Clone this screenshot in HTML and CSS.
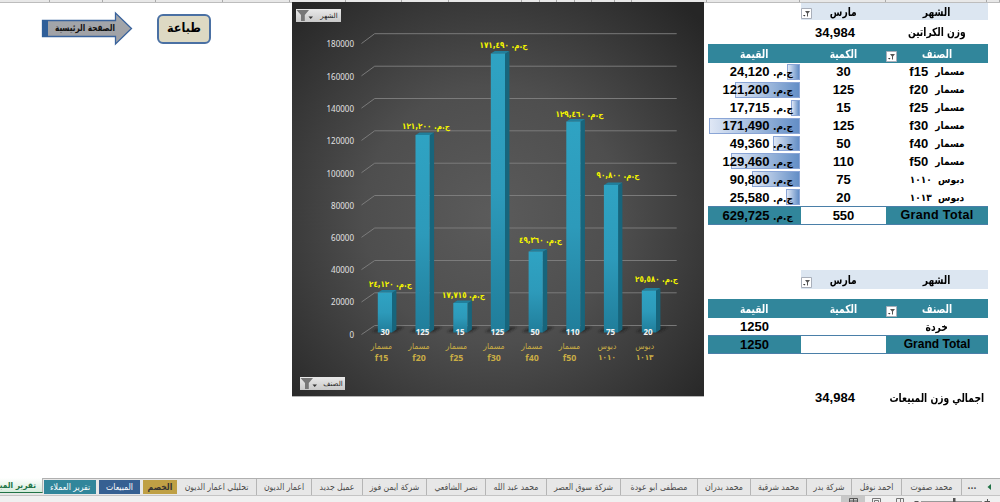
FILE: index.html
```html
<!DOCTYPE html>
<html lang="ar">
<head>
<meta charset="utf-8">
<title>تقرير المبيعات</title>
<link rel="stylesheet" href="styles.css">
</head>
<body>
<div class="app">
  <div class="colheads">
    <i class="w50"></i><i class="w53"></i><i class="w53"></i><i class="w67"></i><i class="w67"></i><i class="w56"></i><i class="w56"></i><i class="w47"></i><i class="w73"></i><i class="w18"></i><i class="w17"></i><i class="w18"></i><i class="w17"></i><i class="w23"></i><i class="w17"></i><i class="w75"></i><i class="w93"></i><i class="w86"></i><i class="w101"></i><i class="rest"></i>
  </div>
  <main class="sheet">
    <section class="actions">
      <svg class="home" width="92" height="36" viewBox="41 11 92 36">
        <defs><linearGradient id="ar" x1="0" y1="0" x2="0" y2="1"><stop offset="0" stop-color="#a3a7ac"/><stop offset="1" stop-color="#a0a0a4"/></linearGradient></defs>
        <path d="M42.500 20.500H115.500V13L131.500 28.500L115.500 44V36.500H42.500Z" fill="url(#ar)" stroke="#39639d" stroke-width="1.300"/>
        <path d="M42 20H48V37H42Z" fill="#2f5f99"/>
        <text x="85" y="30.800" text-anchor="middle" direction="rtl" class="home-text" textLength="60" lengthAdjust="spacingAndGlyphs">الصفحة الرئيسية</text>
      </svg>
      <button class="print" dir="rtl">طباعة</button>
    </section>

    <svg class="chart" width="412" height="395" viewBox="292 2 412 395">
      <defs>
        <radialGradient id="bg" gradientUnits="userSpaceOnUse" cx="492" cy="215" r="285"><stop offset="0" stop-color="#5b5b5b"/><stop offset=".45" stop-color="#4e4e4e"/><stop offset="1" stop-color="#262626"/></radialGradient>
        <linearGradient id="front" x1="0" y1="0" x2="0" y2="1"><stop offset="0" stop-color="#2fa3c3"/><stop offset=".5" stop-color="#2d9aba"/><stop offset="1" stop-color="#207d9a"/></linearGradient>
        <linearGradient id="chip" x1="0" y1="0" x2="0" y2="1"><stop offset="0" stop-color="#e9e9e9"/><stop offset="1" stop-color="#c9c9c9"/></linearGradient>
        <filter id="soft" x="-30%" y="-60%" width="160%" height="220%"><feGaussianBlur stdDeviation="1.300"/></filter>
      </defs>
      <rect x="292" y="2" width="412" height="395" fill="url(#bg)"/>
      <path d="M292 396.500H704" stroke="#b5b5b5"/>
      <g class="grid">
        <path d="M361.500 43.500L374.700 33.700H676.700"/><path d="M361.500 75.800L374.700 66.200H676.700"/><path d="M361.500 108.100L374.700 98.500H676.700"/><path d="M361.500 140.400L374.700 130.800H676.700"/><path d="M361.500 172.700L374.700 163.200H676.700"/><path d="M361.500 205L374.700 195.500H676.700"/><path d="M361.500 237.300L374.700 228H676.700"/><path d="M361.500 269.600L374.700 260.500H676.700"/><path d="M361.500 302L374.700 292.800H676.700"/><path d="M361.500 334.500L374.700 325.500H676.700"/>
      </g>
      <g class="axis">
        <text x="354" y="47">180000</text><text x="354" y="79.500">160000</text><text x="354" y="111.500">140000</text><text x="354" y="144">120000</text><text x="354" y="176.500">100000</text><text x="354" y="208.500">80000</text><text x="354" y="241">60000</text><text x="354" y="273">40000</text><text x="354" y="305.300">20000</text><text x="354" y="337.500">0</text>
      </g>
      <g fill="#202020" opacity=".75" filter="url(#soft)">
        <path d="M372 332L380 327H404L396 332Z"/><path d="M410 332L418 327H442L434 332Z"/><path d="M447 332L455 327H479L471 332Z"/><path d="M485 332L493 327H517L509 332Z"/><path d="M522 332L530 327H554L546 332Z"/><path d="M560 332L568 327H592L584 332Z"/><path d="M598 332L606 327H630L622 332Z"/><path d="M636 332L644 327H668L660 332Z"/>
      </g>
      <g fill="#17657c">
        <path d="M392 292.500L396.400 290V329.500L392 332.500Z"/><path d="M429.700 135L434.100 132.500V329.500L429.700 332.500Z"/><path d="M467.500 303L471.900 300.500V329.500L467.500 332.500Z"/><path d="M505 53.500L509.400 51V329.500L505 332.500Z"/><path d="M542.800 251.500L547.200 249V329.500L542.800 332.500Z"/><path d="M580.500 121.500L584.900 119V329.500L580.500 332.500Z"/><path d="M618 185L622.400 182.500V329.500L618 332.500Z"/><path d="M656 290.500L660.400 288V329.500L656 332.500Z"/>
      </g>
      <g fill="#217f9c">
        <path d="M378 292.500L382 290H396.400L392 292.800Z"/><path d="M415.500 135L419.500 132.500H434.100L429.700 135.300Z"/><path d="M453.300 303L457.300 300.500H471.900L467.500 303.300Z"/><path d="M490.800 53.500L494.800 51H509.400L505 53.800Z"/><path d="M528.600 251.500L532.600 249H547.200L542.800 251.800Z"/><path d="M566.300 121.500L570.300 119H584.900L580.500 121.800Z"/><path d="M604 185L608 182.500H622.400L618 185.300Z"/><path d="M641.800 290.500L645.800 288H660.400L656 290.800Z"/>
      </g>
      <g fill="url(#front)">
        <rect x="377.800" y="292.500" width="14.200" height="40"/><rect x="415.500" y="135" width="14.200" height="197.500"/><rect x="453.300" y="303" width="14.200" height="29.500"/><rect x="490.800" y="53.500" width="14.200" height="279"/><rect x="528.600" y="251.500" width="14.200" height="81"/><rect x="566.300" y="121.500" width="14.200" height="211"/><rect x="603.900" y="185" width="14.200" height="147.500"/><rect x="641.800" y="290.500" width="14.200" height="42"/>
      </g>
      <g class="money" direction="rtl">
        <text x="390.500" y="286.500" textLength="43" lengthAdjust="spacingAndGlyphs">ج.م. ٢٤,١٢٠</text>
        <text x="426" y="128.500" textLength="48" lengthAdjust="spacingAndGlyphs">ج.م. ١٢١,٢٠٠</text>
        <text x="463.500" y="298" textLength="43" lengthAdjust="spacingAndGlyphs">ج.م. ١٧,٧١٥</text>
        <text x="503.500" y="47.500" textLength="48" lengthAdjust="spacingAndGlyphs">ج.م. ١٧١,٤٩٠</text>
        <text x="540.500" y="242.500" textLength="43" lengthAdjust="spacingAndGlyphs">ج.م. ٤٩,٣٦٠</text>
        <text x="579.500" y="116.500" textLength="48" lengthAdjust="spacingAndGlyphs">ج.م. ١٢٩,٤٦٠</text>
        <text x="618" y="177.500" textLength="43" lengthAdjust="spacingAndGlyphs">ج.م. ٩٠,٨٠٠</text>
        <text x="656.500" y="281.500" textLength="43" lengthAdjust="spacingAndGlyphs">ج.م. ٢٥,٥٨٠</text>
      </g>
      <g class="qty">
        <text x="385" y="335">30</text><text x="422.500" y="335">125</text><text x="460" y="335">15</text><text x="497.500" y="335">125</text><text x="535" y="335">50</text><text x="572.700" y="335">110</text><text x="610.500" y="335">75</text><text x="648" y="335">20</text>
      </g>
      <g class="cat">
        <text x="381.500" y="348.500" class="word">مسمار</text><text x="381.500" y="361">f15</text>
        <text x="419" y="348.500" class="word">مسمار</text><text x="419" y="361">f20</text>
        <text x="456.500" y="348.500" class="word">مسمار</text><text x="456.500" y="361">f25</text>
        <text x="494" y="348.500" class="word">مسمار</text><text x="494" y="361">f30</text>
        <text x="532" y="348.500" class="word">مسمار</text><text x="532" y="361">f40</text>
        <text x="569.500" y="348.500" class="word">مسمار</text><text x="569.500" y="361">f50</text>
        <text x="607" y="348.500" class="word">دبوس</text><text x="607" y="359.500" class="code">١٠١٠</text>
        <text x="644.700" y="348.500" class="word">دبوس</text><text x="644.700" y="359.500" class="code">١٠١٣</text>
      </g>
      <g class="chip">
        <rect x="296" y="9" width="45" height="13" fill="url(#chip)"/>
        <path d="M296.500 10H309L304.800 15V21H301V15Z" fill="#777"/><path d="M308.500 16.500H313L310.700 19Z" fill="#333"/>
        <text x="329" y="18">الشهر</text>
        <rect x="300" y="377" width="45" height="13" fill="url(#chip)"/>
        <path d="M300.500 378H313L308.800 383V389H305V383Z" fill="#777"/><path d="M312.500 384.500H317L314.700 387Z" fill="#333"/>
        <text x="333" y="386">الصنف</text>
      </g>
    </svg>

    <section class="tables">
      <svg width="0" height="0" class="defs"><symbol id="filter" viewBox="0 0 11 11"><path d="M.5 .5H10.500V10.500H.5Z" fill="#fff" stroke="#a9afba"/><path d="M4 3H9L7 5.500V8.500H6V5.500Z" fill="#555"/><path d="M2 7H4.500L3.250 8.500Z" fill="#333"/></symbol></svg>
      <div class="row month"><span class="val"></span><span class="num"><svg class="filter"><use href="#filter"/></svg><b class="a">مارس</b></span><span class="name"><b class="a">الشهر</b></span></div>
      <div class="row weight"><span class="val"></span><span class="num">34,984</span><span class="name"><b class="a">وزن الكراتين</b></span></div>
      <div class="row head"><span class="val"><b class="a">القيمة</b></span><span class="num"><b class="a">الكمية</b></span><span class="name"><svg class="filter"><use href="#filter"/></svg><b class="a">الصنف</b></span></div>
      <div class="body">
        <div class="row"><span class="val money-cell" dir="rtl"><i style="width:13px"></i><b><b class="s">ج.م.</b> 24,120</b></span><span class="num">30</span><span class="name" dir="rtl"><b class="s">مسمار</b>&nbsp;&nbsp;f15</span></div>
        <div class="row"><span class="val money-cell" dir="rtl"><i style="width:65px"></i><b><b class="s">ج.م.</b> 121,200</b></span><span class="num">125</span><span class="name" dir="rtl"><b class="s">مسمار</b>&nbsp;&nbsp;f20</span></div>
        <div class="row"><span class="val money-cell" dir="rtl"><i style="width:9px"></i><b><b class="s">ج.م.</b> 17,715</b></span><span class="num">15</span><span class="name" dir="rtl"><b class="s">مسمار</b>&nbsp;&nbsp;f25</span></div>
        <div class="row"><span class="val money-cell" dir="rtl"><i style="width:91px"></i><b><b class="s">ج.م.</b> 171,490</b></span><span class="num">125</span><span class="name" dir="rtl"><b class="s">مسمار</b>&nbsp;&nbsp;f30</span></div>
        <div class="row"><span class="val money-cell" dir="rtl"><i style="width:27px"></i><b><b class="s">ج.م.</b> 49,360</b></span><span class="num">50</span><span class="name" dir="rtl"><b class="s">مسمار</b>&nbsp;&nbsp;f40</span></div>
        <div class="row"><span class="val money-cell" dir="rtl"><i style="width:69px"></i><b><b class="s">ج.م.</b> 129,460</b></span><span class="num">110</span><span class="name" dir="rtl"><b class="s">مسمار</b>&nbsp;&nbsp;f50</span></div>
        <div class="row"><span class="val money-cell" dir="rtl"><i style="width:48px"></i><b><b class="s">ج.م.</b> 90,800</b></span><span class="num">75</span><span class="name" dir="rtl"><b class="s">دبوس&nbsp; ١٠١٠</b></span></div>
        <div class="row"><span class="val money-cell" dir="rtl"><i style="width:14px"></i><b><b class="s">ج.م.</b> 25,580</b></span><span class="num">20</span><span class="name" dir="rtl"><b class="s">دبوس&nbsp; ١٠١٣</b></span></div>
      </div>
      <div class="row total"><span class="val money-cell" dir="rtl"><b><b class="s">ج.م.</b> 629,725</b></span><span class="num">550</span><span class="name">Grand Total</span></div>

      <div class="row month second"><span class="val"></span><span class="num"><svg class="filter"><use href="#filter"/></svg><b class="a">مارس</b></span><span class="name"><b class="a">الشهر</b></span></div>
      <div class="row head second"><span class="val"><b class="a">القيمة</b></span><span class="num"><b class="a">الكمية</b></span><span class="name"><svg class="filter"><use href="#filter"/></svg><b class="a">الصنف</b></span></div>
      <div class="row scrap"><span class="val">1250</span><span class="num"></span><span class="name"><b class="a">خردة</b></span></div>
      <div class="row total"><span class="val">1250</span><span class="num"></span><span class="name small">Grand Total</span></div>
      <div class="row sum"><span class="val"></span><span class="num">34,984</span><span class="name"><b class="a">اجمالي وزن المبيعات</b></span></div>
    </section>
  </main>

  <nav class="tabs">
    <span class="tab active">تقرير المبيعات</span>
    <span class="tab teal">تقرير العملاء</span>
    <span class="tab blue">المبيعات</span>
    <span class="tab gold">الخصم</span>
    <span class="tab t1">تحليلي اعمار الديون</span>
    <span class="tab t2">اعمار الديون</span>
    <span class="tab t3">عميل جديد</span>
    <span class="tab t4">شركة ايمن فوز</span>
    <span class="tab t5">نصر الشافعي</span>
    <span class="tab t6">محمد عبد الله</span>
    <span class="tab t7">شركة سوق العصر</span>
    <span class="tab t8">مصطفى ابو عودة</span>
    <span class="tab t9">محمد بدران</span>
    <span class="tab t10">محمد شرقية</span>
    <span class="tab t11">شركة بدر</span>
    <span class="tab t12">احمد نوفل</span>
    <span class="tab t13">محمد صفوت</span>
    <span class="more">...</span>
    <svg class="prev" width="5" height="6" viewBox="0 0 5 6"><path d="M4 0V6L0.500 3Z" fill="#217346"/></svg>
  </nav>
  <footer class="status">
    <svg width="160" height="6" viewBox="840 496 160 6">
      <rect x="841" y="496" width="24" height="6" fill="#c8c8c8"/>
      <path d="M849.500 502V498.500H857.500V502M849.500 501H857.500M853.500 498.500V502" fill="none" stroke="#555"/>
      <path d="M872.500 502V498.500H880.500V502M874.500 502V500.500H878.500V502" fill="none" stroke="#777"/>
      <path d="M896.500 502V498.500H903.500V502M900.500 498V502" fill="none" stroke="#777"/>
      <path d="M914.500 501.500H918.500M984.500 501.500H990M987.500 499V502" stroke="#555"/>
      <path d="M921 501.500H982" stroke="#999"/><path d="M953 498H955.500V502H953Z" fill="#555"/>
    </svg>
  </footer>
</div>
</body>
</html>
```
FILE: styles.css
```css
* { box-sizing: border-box; }
body { margin: 0; background: #fff; font-family: "Liberation Sans", "DejaVu Sans", sans-serif; color: #000; }
.app { width: 1000px; height: 502px; display: flex; flex-direction: column; overflow: hidden; }

.colheads { display: flex; height: 3px; flex: none; background: #e8e8e8; border-bottom: 1px solid #bdbdbd; }
.colheads i { border-right: 1px solid #aaa; flex: none; }
.colheads .rest { flex: 1; }
.w50 { width: 50px; } .w53 { width: 53px; } .w67 { width: 67px; } .w56 { width: 56px; }
.w47 { width: 47px; } .w73 { width: 73px; } .w18 { width: 18px; } .w17 { width: 17px; }
.w23 { width: 23px; } .w75 { width: 75px; } .w93 { width: 93px; } .w86 { width: 86px; } .w101 { width: 101px; }

.sheet { display: flex; height: 475px; flex: none; }
.actions { width: 292px; display: flex; align-items: flex-start; padding: 8px 0 0 41px; gap: 24px; }
.home-text { font: bold 9.500px "DejaVu Sans Condensed", "DejaVu Sans", sans-serif; fill: #111; }
.print { width: 54px; height: 30px; margin-top: 3px; padding: 0 0 3px; border: 2px solid #4a70a3; border-radius: 6px; background: #ddd9c3; font: bold 12.500px "DejaVu Sans Condensed", "DejaVu Sans", sans-serif; color: #000; }

.chart { display: block; flex: none; margin-top: -1px; }
.grid path { fill: none; stroke: #808080; stroke-width: .9; }
.axis text { font: 8px "Noto Sans", sans-serif; fill: #e2e2e2; text-anchor: end; }
.money text { font: bold 8.500px "DejaVu Sans Condensed", "DejaVu Sans", sans-serif; fill: #f4f400; text-anchor: middle; }
.qty text { font: bold 8px "Noto Sans", sans-serif; fill: #f2f2f2; text-anchor: middle; }
.cat text { font: bold 8.800px "Noto Sans", "DejaVu Sans", sans-serif; fill: #c9ad45; text-anchor: middle; }
.cat .word { font: 8.500px "DejaVu Sans Condensed", "DejaVu Sans", sans-serif; }
.cat .code { font: bold 8px "DejaVu Sans Condensed", "DejaVu Sans", sans-serif; }
.chip text { font: 7px "DejaVu Sans", sans-serif; fill: #222; text-anchor: middle; }

.tables { width: 280px; margin-left: 4px; flex: none; font-weight: bold; font-size: 13px; }
.tables b { font-weight: bold; }
.defs { display: block; }
.row { display: grid; grid-template-columns: 93px 85px 102px; height: 17.900px; white-space: nowrap; }
.row > span { display: flex; align-items: center; justify-content: center; position: relative; min-width: 0; }
.a, .s { font-family: "DejaVu Sans Condensed", "DejaVu Sans", sans-serif; }
.a { display: inline-block; font-size: 11.500px; transform: scaleX(.88); }
.s { font-size: 10px; }
.month { height: 17px; }
.month .num, .month .name { background: #dce6f1; }
.weight { height: 24px; }
.weight .num, .sum .num { padding-right: 17px; }
.head { height: 19px; color: #fff; }
.head > span { background: #31869b; }
.filter { position: absolute; left: 0; bottom: 1px; width: 11px; height: 11px; }
.row > .money-cell { justify-content: flex-start; padding-right: 8px; }
.money-cell > b { position: relative; }
.money-cell i { position: absolute; right: 1px; top: 1px; bottom: 1px; border: 1px solid #8aa5d6; background: linear-gradient(to right, #dfe7f5, #638ec6); }
.total { height: 18.500px; }
.total > span { background: #31869b; border: solid #4a7fa8; border-width: 1px 0; }
.total > .num { background: #fff; }
.total .name { font-size: 12.500px; letter-spacing: .35px; }
.total .small { font-size: 12px; letter-spacing: 0; }
.month.second { margin-top: 45.500px; height: 19px; }
.head.second { margin-top: 10px; }
.scrap { height: 17px; }
.sum { margin-top: 35px; }

.tabs { height: 18px; flex: none; display: flex; background: #e7e7e7; border-top: 1px solid #b0b0b0; border-bottom: 1px solid #c4c4c4; font: 8.600px "DejaVu Sans Condensed", "DejaVu Sans", sans-serif; color: #4a4a4a; direction: ltr; }
.tab { display: flex; align-items: center; justify-content: center; flex: none; white-space: nowrap; direction: rtl; overflow: hidden; border-right: 1px solid #b5b5b5; padding-bottom: 1px; }
.active { width: 43px; justify-content: flex-start; padding-right: 6px; height: 15px; margin-top: -1px; background: linear-gradient(#fff, #d5ebdc); color: #217346; font-weight: bold; font-size: 8.300px; border-bottom: 1px solid #217346; }
.teal, .blue, .gold { margin: 1px 0; border: 0; color: #fff; }
.teal { width: 52px; margin-left: 1px; background: #31869b; }
.blue { width: 41px; margin-left: 3px; background: #366092; }
.gold { width: 34px; margin-left: 3px; background: #bfa045; color: #333; font-weight: bold; }
.t1 { width: 80px; } .t2 { width: 55px; } .t3 { width: 51px; } .t4 { width: 64px; } .t5 { width: 59px; }
.t6 { width: 61px; } .t7 { width: 74px; } .t8 { width: 77px; } .t9 { width: 53px; } .t10 { width: 56px; }
.t11 { width: 45px; } .t12 { width: 50px; } .t13 { width: 60px; }
.more { width: 18px; text-align: center; font-weight: bold; margin-left: 1px; line-height: 15px; }
.prev { margin: 5px 0 0 6px; }
.status { height: 6px; background: #f0f0f0; display: flex; justify-content: flex-end; }
.status svg { display: block; }
```
